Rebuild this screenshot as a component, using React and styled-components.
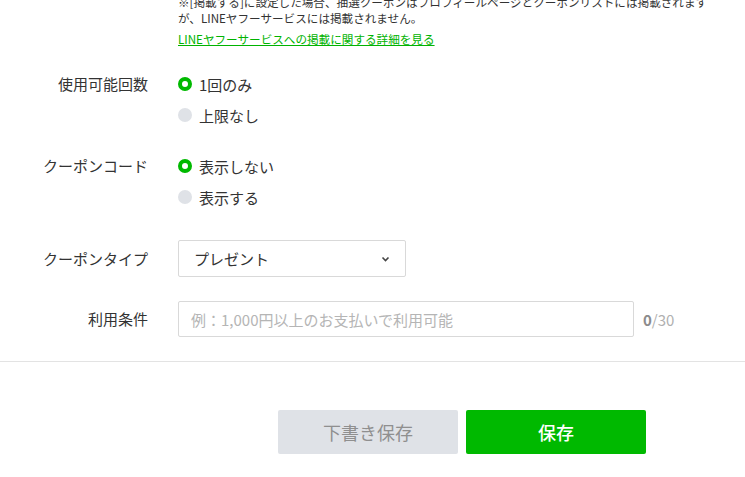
import React from 'react'
import styled, { createGlobalStyle } from 'styled-components'

const GlobalStyle = createGlobalStyle`
  html, body {
    margin: 0;
    padding: 0;
    background: #fff;
    overflow: hidden;
  }
  body {
    font-family: "Noto Sans CJK JP", "Noto Sans", "Liberation Sans", sans-serif;
    color: #333;
  }
`

const Page = styled.div`
  width: 745px;
  height: 477px;
  overflow: hidden;
`

const Scroller = styled.div`
  margin-top: -6px;
`

const Note = styled.div`
  padding-left: 178px;
  padding-right: 4px;
  font-size: 11.6px;
  line-height: 16px;
  color: #333;
  p {
    margin: 0;
    white-space: nowrap;
  }
  a {
    display: inline-block;
    margin-top: 5px;
    color: #00b300;
    text-decoration: underline;
  }
`

const Row = styled.div`
  display: grid;
  grid-template-columns: 148px 1fr;
  column-gap: 30px;
  align-items: ${p => (p.$center ? 'center' : 'start')};
  margin-top: ${p => p.$top}px;
`

const Label = styled.div`
  text-align: right;
  font-size: 15px;
  line-height: 20px;
  color: #333;
`

const Options = styled.div`
  display: flex;
  flex-direction: column;
  gap: 11px;
`

const Option = styled.label`
  display: flex;
  align-items: center;
  gap: 7px;
  height: 20px;
  font-size: 15px;
  color: #333;
`

const Dot = styled.span`
  box-sizing: border-box;
  width: 14px;
  height: 14px;
  border-radius: 50%;
  background: ${p => (p.$on ? '#fff' : '#dfe2e7')};
  border: ${p => (p.$on ? '4px solid #00b900' : 'none')};
`

const Select = styled.div`
  box-sizing: border-box;
  width: 228px;
  height: 37px;
  border: 1px solid #d9d9d9;
  border-radius: 2px;
  display: flex;
  align-items: center;
  justify-content: space-between;
  padding: 0 15px;
  font-size: 15px;
  color: #333;
`

const InputLine = styled.div`
  display: flex;
  align-items: center;
  gap: 9px;
`

const Input = styled.div`
  box-sizing: border-box;
  width: 456px;
  height: 36px;
  border: 1px solid #d9d9d9;
  border-radius: 2px;
  display: flex;
  align-items: center;
  padding: 0 12px;
  font-size: 15px;
  color: #b5b5b5;
`

const Counter = styled.span`
  font-size: 15px;
  color: #b0b0b0;
  b {
    color: #8c8c8c;
  }
`

const Divider = styled.hr`
  margin: 24px 0 0;
  border: 0;
  border-top: 1px solid #e3e3e3;
`

const Actions = styled.div`
  display: flex;
  gap: 8px;
  padding-left: 278px;
  margin-top: 48px;
`

const Button = styled.button`
  width: 180px;
  height: 44px;
  border: 0;
  border-radius: 2px;
  font-family: inherit;
  font-size: 18px;
  background: ${p => (p.$primary ? '#00b900' : '#dfe2e7')};
  color: ${p => (p.$primary ? '#fff' : '#8f8f8f')};
  font-weight: ${p => (p.$primary ? 500 : 400)};
`

function Radio({ on, children }) {
  return (
    <Option>
      <Dot $on={on} />
      {children}
    </Option>
  )
}

export default function App() {
  return (
    <Page>
      <GlobalStyle />
      <Scroller>
        <Note>
          <p>※[掲載する]に設定した場合、抽選クーポンはプロフィールページとクーポンリストには掲載されます</p>
          <p>が、LINEヤフーサービスには掲載されません。</p>
          <a href="#">LINEヤフーサービスへの掲載に関する詳細を見る</a>
        </Note>

        <Row $top={27}>
          <Label>使用可能回数</Label>
          <Options>
            <Radio on>1回のみ</Radio>
            <Radio>上限なし</Radio>
          </Options>
        </Row>

        <Row $top={31}>
          <Label>クーポンコード</Label>
          <Options>
            <Radio on>表示しない</Radio>
            <Radio>表示する</Radio>
          </Options>
        </Row>

        <Row $top={33} $center>
          <Label>クーポンタイプ</Label>
          <Select>
            <span>プレゼント</span>
            <svg width="9" height="6" viewBox="0 0 9 6">
              <path d="M1.5 1.5 L4.5 4.5 L7.5 1.5" fill="none" stroke="#444" strokeWidth="1.6" />
            </svg>
          </Select>
        </Row>

        <Row $top={24} $center>
          <Label>利用条件</Label>
          <InputLine>
            <Input>例：1,000円以上のお支払いで利用可能</Input>
            <Counter><b>0</b>/30</Counter>
          </InputLine>
        </Row>

        <Divider />

        <Actions>
          <Button>下書き保存</Button>
          <Button $primary>保存</Button>
        </Actions>
      </Scroller>
    </Page>
  )
}
